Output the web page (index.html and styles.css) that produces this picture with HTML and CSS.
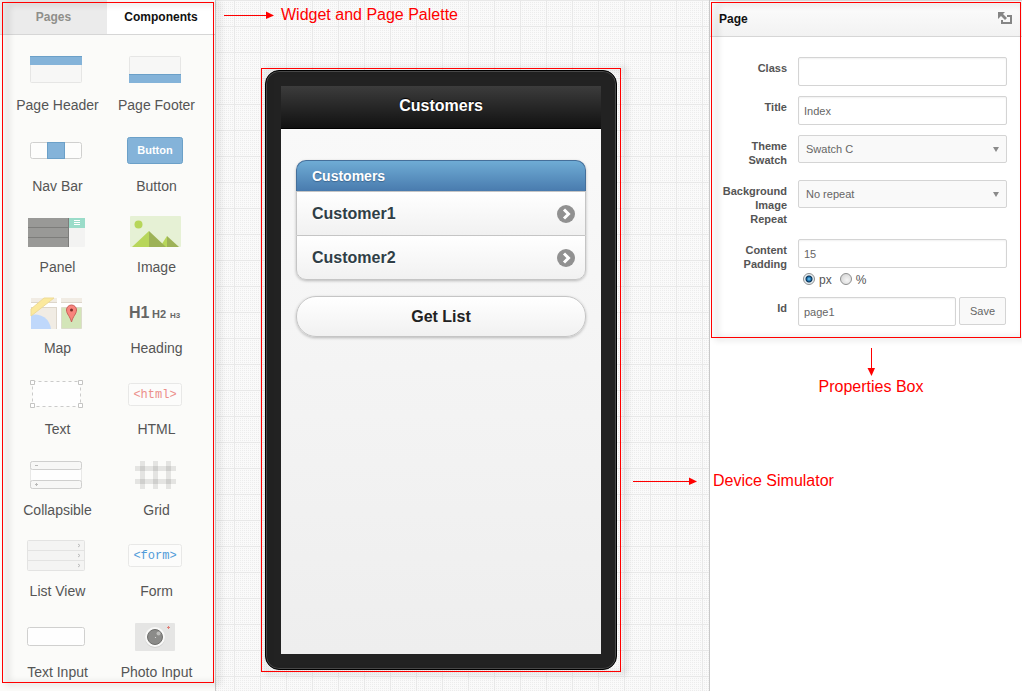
FILE: index.html
```html
<!DOCTYPE html>
<html lang="en">

<head>
    <meta charset="UTF-8">
    <meta name="viewport" content="width=device-width, initial-scale=1.0">
    <title>App Builder</title>
    <link rel="stylesheet" href="styles.css">
</head>

<body>
    <div class="builder">
        <aside class="palette">
            <div class="tabs">
                <button type="button" class="tab">Pages</button>
                <button type="button" class="tab active">Components</button>
            </div>

            <div class="widgets">
                <div class="widget">
                    <svg width="59" height="34" viewBox="0 0 59 34">
                        <rect x="3.5" y="4.5" width="51" height="26" rx="1" fill="#f7f7f6" stroke="#e6e6e5" />
                        <rect x="3" y="4" width="52" height="9" fill="#84b3d9" />
                        <rect x="3" y="4" width="52" height="1" fill="#6ba0c8" />
                    </svg>
                    <span>Page Header</span>
                </div>
                <div class="widget">
                    <svg width="59" height="34" viewBox="0 0 59 34">
                        <rect x="3.5" y="4.5" width="51" height="26" rx="1" fill="#f7f7f6" stroke="#e6e6e5" />
                        <rect x="3" y="22" width="52" height="9" fill="#84b3d9" />
                        <rect x="3" y="22" width="52" height="1" fill="#6ba0c8" />
                    </svg>
                    <span>Page Footer</span>
                </div>
                <div class="widget">
                    <svg width="59" height="34" viewBox="0 0 59 34">
                        <rect x="3.5" y="9.5" width="51" height="16" rx="2" fill="#fdfdfc" stroke="#d0d0cf" />
                        <rect x="20.5" y="9.5" width="17" height="16" fill="#84b3d9" stroke="#6ba0c8" />
                    </svg>
                    <span>Nav Bar</span>
                </div>
                <div class="widget">
                    <svg width="59" height="34" viewBox="0 0 59 34">
                        <rect x="1.5" y="4.5" width="55" height="26" rx="2" fill="#84b3d9" stroke="#6ba0c8" />
                        <text x="29" y="21" class="icon-button">Button</text>
                    </svg>
                    <span>Button</span>
                </div>
                <div class="widget">
                    <svg width="59" height="34" viewBox="0 0 59 34">
                        <rect x="1" y="4" width="57" height="29" rx="1" fill="#f3f3f2" />
                        <rect x="1" y="4" width="41" height="29" fill="#999997" />
                        <path d="M1 13.5H42M1 23.5H42M41.500 4V33" stroke="#7d7d7b" />
                        <rect x="42" y="4" width="16" height="10" fill="#9adcc9" />
                        <path d="M47 6.500H53M47 8.500H53M47 10.500H53" stroke="#fff" />
                    </svg>
                    <span>Panel</span>
                </div>
                <div class="widget">
                    <svg width="59" height="34" viewBox="0 0 59 34">
                        <rect x="4" y="2" width="51" height="31" rx="1" fill="#e6f1d5" />
                        <circle cx="12.500" cy="10.500" r="4" fill="#b7d65a" />
                        <path d="M34 33L41 22V33Z" fill="#b7d65a" />
                        <path d="M41 22L53 33H41Z" fill="#9db257" />
                        <path d="M6 33L23 17V33Z" fill="#b7d65a" />
                        <path d="M23 17L40 33H23Z" fill="#9db257" />
                    </svg>
                    <span>Image</span>
                </div>
                <div class="widget">
                    <svg width="59" height="34" viewBox="0 0 59 34">
                        <rect x="4" y="3" width="51" height="31" fill="#fff" />
                        <path d="M4 3H30V7H4ZM34 3H55V7H34ZM4 12H30V34H4Z" fill="#f1ece4" />
                        <path d="M34.500 12.500H54.500V33.500H34.500Z" fill="#d3e5b8" stroke="#dcdccb" />
                        <path d="M4 7.500H30M34 7.500H55M4 12.500H30M29.500 12V34" stroke="#ddd6cb" fill="none" />
                        <path d="M4 20A16 16 0 0 1 24 34H4Z" fill="#bfd8fb" />
                        <path d="M4 14L17 3H27L4 21Z" fill="#fbe99d" stroke="#eedb96" />
                        <path d="M44.500 27C43 21 39.500 19 39.500 15A5 5 0 0 1 49.500 15C49.500 19 46 21 44.500 27Z" fill="#f9847d" stroke="#c9605a" />
                        <circle cx="44.500" cy="15" r="1.500" fill="#7c2b27" />
                    </svg>
                    <span>Map</span>
                </div>
                <div class="widget">
                    <svg width="59" height="34" viewBox="0 0 59 34" class="icon-heading">
                        <text x="3" y="23" font-size="16">H1</text>
                        <text x="26" y="23" font-size="11">H2</text>
                        <text x="44" y="23" font-size="8">H3</text>
                    </svg>
                    <span>Heading</span>
                </div>
                <div class="widget">
                    <svg width="59" height="34" viewBox="0 0 59 34">
                        <rect x="5.500" y="5.500" width="48" height="25" fill="#fefefe" stroke="#cbcbca" stroke-dasharray="3 3" />
                        <path d="M3.500 4.500h4v4h-4zM51.500 4.500h4v4h-4zM3.500 27.500h4v4h-4zM51.500 27.500h4v4h-4z" fill="#fff" stroke="#c4c4c3" />
                    </svg>
                    <span>Text</span>
                </div>
                <div class="widget">
                    <svg width="59" height="34" viewBox="0 0 59 34">
                        <rect x="2.500" y="7.500" width="53" height="22" rx="2" fill="#fcfcfb" stroke="#e8e8e7" />
                        <text x="29" y="22" class="icon-code" fill="#ec8f8a">&lt;html&gt;</text>
                    </svg>
                    <span>HTML</span>
                </div>
                <div class="widget">
                    <svg width="59" height="34" viewBox="0 0 59 34">
                        <rect x="3.500" y="4.500" width="51" height="27" rx="2" fill="#fefefe" stroke="#e8e8e7" />
                        <rect x="3.500" y="4.500" width="51" height="8" rx="2" fill="#f7f7f6" stroke="#cfcfce" />
                        <rect x="3.500" y="23.500" width="51" height="8" rx="2" fill="#f7f7f6" stroke="#cfcfce" />
                        <path d="M8 8.500h3M8 27.500h3M9.500 26v3" stroke="#b9b9b8" />
                    </svg>
                    <span>Collapsible</span>
                </div>
                <div class="widget">
                    <svg width="59" height="34" viewBox="0 0 59 34">
                        <path d="M14 4h5v28h-5zM27 4h5v28h-5zM40 4h5v28h-5z" fill="#000" fill-opacity=".09" />
                        <path d="M9 9h41v5H9zM9 22h41v5H9z" fill="#000" fill-opacity=".09" />
                    </svg>
                    <span>Grid</span>
                </div>
                <div class="widget">
                    <svg width="59" height="34" viewBox="0 0 59 34">
                        <rect x=".5" y="2.500" width="57" height="30" rx="1" fill="#f4f4f3" stroke="#e3e3e2" />
                        <path d="M0 12.500H58M0 22.500H58" stroke="#e3e3e2" />
                        <path d="M51 6l2 1.500l-2 1.500M51 16l2 1.500l-2 1.500M51 26l2 1.500l-2 1.500" stroke="#bbb" fill="none" />
                    </svg>
                    <span>List View</span>
                </div>
                <div class="widget">
                    <svg width="59" height="34" viewBox="0 0 59 34">
                        <rect x="2.500" y="6.500" width="53" height="22" rx="2" fill="#fcfcfb" stroke="#e8e8e7" />
                        <text x="29" y="21" class="icon-code" fill="#4f9bd9">&lt;form&gt;</text>
                    </svg>
                    <span>Form</span>
                </div>
                <div class="widget">
                    <svg width="59" height="34" viewBox="0 0 59 34">
                        <rect x=".5" y="8.500" width="57" height="18" rx="2" fill="#fefefe" stroke="#d0d0cf" />
                    </svg>
                    <span>Text Input</span>
                </div>
                <div class="widget">
                    <svg width="59" height="34" viewBox="0 0 59 34">
                        <rect x="9" y="4" width="40" height="28" rx="1" fill="#e5e5e4" />
                        <circle cx="29" cy="19" r="10" fill="#d2d2d1" />
                        <circle cx="29" cy="18" r="10" fill="#f9f9f8" />
                        <circle cx="29" cy="18" r="7.500" fill="#8b8b89" stroke="#6e6e6c" />
                        <circle cx="32.500" cy="14.500" r="2" fill="#bdbdbb" />
                        <circle cx="29.500" cy="18.500" r=".6" fill="#ddd" />
                        <path d="M41 8.500h3M42.500 7v3" stroke="#e08078" />
                    </svg>
                    <span>Photo Input</span>
                </div>
            </div>
            <div class="outline"></div>
        </aside>

        <main class="canvas">
            <div class="note note-palette">
                <svg width="50" height="8" viewBox="0 0 50 8">
                    <path d="M0 4.500H42" stroke="#f00" />
                    <path d="M42 .5L50 4.500L42 8Z" fill="#f00" />
                </svg>
                <span>Widget and Page Palette</span>
            </div>

            <div class="device">
                <div class="screen">
                    <header class="screen-header">
                        <h1>Customers</h1>
                    </header>
                    <div class="screen-content">
                        <div class="list">
                            <h2>Customers</h2>
                            <a href="#">Customer1
                                <svg width="18" height="18" viewBox="0 0 18 18">
                                    <circle cx="9" cy="9" r="9" fill="#919191" />
                                    <path d="M7 4.500L11.500 9L7 13.500" stroke="#fff" stroke-width="3" fill="none" />
                                </svg>
                            </a>
                            <a href="#">Customer2
                                <svg width="18" height="18" viewBox="0 0 18 18">
                                    <circle cx="9" cy="9" r="9" fill="#919191" />
                                    <path d="M7 4.500L11.500 9L7 13.500" stroke="#fff" stroke-width="3" fill="none" />
                                </svg>
                            </a>
                        </div>
                        <button type="button" class="get-list">Get List</button>
                    </div>
                </div>
                <div class="outline"></div>
            </div>

            <div class="note note-device">
                <svg width="64" height="8" viewBox="0 0 64 8">
                    <path d="M0 4.500H56" stroke="#f00" />
                    <path d="M56 .5L64 4.500L56 8Z" fill="#f00" />
                </svg>
                <span>Device Simulator</span>
            </div>
        </main>

        <aside class="sidebar">
            <section class="properties">
                <header class="properties-header">
                    <h2>Page</h2>
                    <svg width="14" height="13" viewBox="0 0 14 13">
                        <path d="M0 0H7L5 2L9 6L7 8L3 4L0 7Z" fill="#858585" />
                        <path d="M9 4H13V11H4V8" stroke="#858585" stroke-width="2" fill="none" />
                    </svg>
                </header>

                <form class="properties-form">
                    <label for="class">Class</label>
                    <input type="text" id="class">

                    <label for="title">Title</label>
                    <input type="text" id="title" value="Index">

                    <label for="theme">Theme Swatch</label>
                    <div class="select">
                        <select id="theme">
                            <option>Swatch C</option>
                        </select>
                    </div>

                    <label for="repeat">Background Image Repeat</label>
                    <div class="select">
                        <select id="repeat">
                            <option>No repeat</option>
                        </select>
                    </div>

                    <label for="padding">Content Padding</label>
                    <div>
                        <input type="text" id="padding" value="15">
                        <div class="units">
                            <input type="radio" name="unit" id="unit-px" checked>
                            <label for="unit-px">px</label>
                            <input type="radio" name="unit" id="unit-percent">
                            <label for="unit-percent">%</label>
                        </div>
                    </div>

                    <label for="page-id">Id</label>
                    <div class="id-row">
                        <input type="text" id="page-id" value="page1">
                        <button type="button">Save</button>
                    </div>
                </form>
                <div class="outline"></div>
            </section>

            <div class="note note-properties">
                <svg width="8" height="28" viewBox="0 0 8 28">
                    <path d="M4.500 0V20" stroke="#f00" />
                    <path d="M.5 20H8L4.500 28Z" fill="#f00" />
                </svg>
                <span>Properties Box</span>
            </div>
        </aside>
    </div>
</body>

</html>
```
FILE: styles.css
```css
* {
    box-sizing: border-box;
}

body {
    margin: 0;
    font-family: "Liberation Sans", Arial, sans-serif;
    font-size: 11px;
    color: #555;
    background-color: #fff;
}

h1,
h2 {
    margin: 0;
}

svg {
    display: block;
    flex: none;
}

button,
input,
select {
    font-family: inherit;
    font-size: 11px;
    color: #666;
}

.builder {
    display: grid;
    grid-template-columns: 216px 1fr 313px;
    height: 100vh;
    overflow: hidden;
}

/* red callout around a part of the page */
.outline {
    position: absolute;
    inset: 2px 1px 8px 2px;
    border: 1px solid #f00;
    filter: drop-shadow(5px 1px 3px rgba(0, 0, 0, 0.4));
    pointer-events: none;
}

.note {
    display: flex;
    align-items: center;
    color: #f00;
    font-size: 16px;
    line-height: 18px;
    white-space: nowrap;
}

/* Palette */
.palette {
    position: relative;
    z-index: 1;
    background-color: #fbfbf9;
    border-right: 1px solid #c8c8c8;
}

.tabs {
    display: grid;
    grid-template-columns: 107px 1fr;
    border-bottom: 1px solid #d6d6d6;
}

.tab {
    height: 34px;
    padding: 0;
    border: none;
    background-color: #ebebeb;
    color: #8f8f8a;
    font-size: 12px;
    font-weight: bold;
    cursor: pointer;
}

.tab.active {
    background-color: #fff;
    color: #111;
}

.widgets {
    display: grid;
    grid-template-columns: 1fr 1fr;
    row-gap: 19px;
    padding: 17px 10px 0 7px;
}

.widget {
    display: flex;
    flex-direction: column;
    align-items: center;
    gap: 10px;
    font-size: 14px;
    line-height: 18px;
    white-space: nowrap;
}

.widget span {
    padding-left: 2px;
}

.icon-button {
    font-size: 11px;
    font-weight: bold;
    fill: #fff;
    text-anchor: middle;
}

.icon-heading {
    font-weight: bold;
    fill: #666;
}

.icon-code {
    font-family: "Liberation Mono", "Courier New", monospace;
    font-size: 12px;
    text-anchor: middle;
}

/* Canvas */
.canvas {
    position: relative;
    padding: 70px 0 0 49px;
    background-color: #fafafa;
    background-image:
        linear-gradient(to right, #e8e8e8 1px, transparent 1px),
        linear-gradient(#e8e8e8 1px, transparent 1px),
        conic-gradient(transparent 270deg, #ececec 0);
    background-size: 26px 26px, 26px 26px, 2px 2px;
    background-position: 18px 0, 0 0, 0 0;
}

.note-palette {
    position: absolute;
    top: 6px;
    left: 8px;
    gap: 7px;
}

.note-device {
    position: absolute;
    top: 472px;
    left: 417px;
    gap: 16px;
    z-index: 2;
}

.device {
    position: relative;
    width: 352px;
    padding: 15px;
    border: 1px solid #000;
    border-radius: 14px;
    background-color: #222;
    box-shadow: inset 0 0 0 1px #4a4a4a;
}

.device .outline {
    inset: -3px -5px -3px -5px;
}

.screen {
    display: flex;
    flex-direction: column;
    min-height: 568px;
    font-size: 16px;
}

.screen-header {
    padding: 9px 0 11px;
    border-bottom: 1px solid #000;
    background: linear-gradient(#3c3c3c, #111);
    color: #fff;
    text-align: center;
    text-shadow: 0 -1px 1px #000;
}

.screen-header h1 {
    font-size: 16px;
    line-height: 22px;
}

.screen-content {
    flex: 1;
    padding: 31px 15px 15px;
    background: linear-gradient(#f9f9f9, #eee);
}

.list {
    margin-bottom: 16px;
    border-radius: 10px;
    box-shadow: 0 1px 3px rgba(0, 0, 0, 0.25);
}

.list h2 {
    padding: 0 15px;
    border: 1px solid #456f9a;
    border-bottom: none;
    border-radius: 10px 10px 0 0;
    background: linear-gradient(#6facd5, #497bae);
    color: #fff;
    font-size: 14px;
    line-height: 30px;
    text-shadow: 0 1px 1px #3e6790;
}

.list a {
    display: flex;
    align-items: center;
    justify-content: space-between;
    height: 44px;
    padding: 0 10px 0 15px;
    border: 1px solid #c5c5c5;
    border-bottom: none;
    background: linear-gradient(#fff, #f1f1f1);
    color: #2f3e46;
    font-weight: bold;
    text-decoration: none;
    text-shadow: 0 1px 0 #fff;
}

.list a:last-child {
    height: 45px;
    border-bottom: 1px solid #c5c5c5;
    border-radius: 0 0 10px 10px;
}

.get-list {
    width: 100%;
    height: 41px;
    border: 1px solid #c5c5c5;
    border-radius: 20px;
    background: linear-gradient(#fff, #f1f1f1);
    box-shadow: 0 1px 3px rgba(0, 0, 0, 0.25);
    color: #222;
    font-size: 16px;
    font-weight: bold;
    cursor: pointer;
}

/* Properties */
.sidebar {
    border-left: 1px solid #c8c8c8;
    background-color: #fff;
}

.properties {
    position: relative;
    padding-bottom: 14px;
}

.properties .outline {
    inset: 2px 1px 2px 1px;
}

.properties-header {
    display: flex;
    align-items: center;
    justify-content: space-between;
    height: 37px;
    padding: 0 10px 0 9px;
    border-top: 1px solid #ddd;
    border-bottom: 1px solid #d6d6d6;
    background: linear-gradient(#fdfdfd, #f2f2f2);
}

.properties-header h2 {
    color: #111;
    font-size: 12px;
}

.properties-form {
    display: grid;
    grid-template-columns: 77px 1fr;
    gap: 10px 11px;
    align-items: start;
    padding: 20px 15px 0 0;
}

.properties-form > label {
    padding: 4px 0 3px 10px;
    font-weight: bold;
    line-height: 14px;
    text-align: right;
}

.properties-form input[type="text"] {
    display: block;
    width: 100%;
    height: 29px;
    padding: 0 5px;
    border: 1px solid #d4d4d4;
    border-radius: 2px;
    background-color: #fff;
    box-shadow: inset 0 1px 2px rgba(0, 0, 0, 0.06);
}

.select {
    position: relative;
}

.select select {
    display: block;
    appearance: none;
    width: 100%;
    height: 28px;
    padding: 0 7px;
    border: 1px solid #d4d4d4;
    border-radius: 2px;
    background-color: #f9f9f9;
}

.select::after {
    content: "";
    position: absolute;
    top: 12px;
    right: 8px;
    border: 3px solid transparent;
    border-top: 5px solid #8a8a8a;
    border-bottom: none;
    pointer-events: none;
}

.units {
    display: flex;
    align-items: center;
    height: 19px;
    padding: 2px 0 0 5px;
    font-size: 12px;
}

.units input {
    appearance: none;
    width: 12px;
    height: 12px;
    margin: 0 4px 0 0;
    border: 1px solid #8e8f8f;
    border-radius: 50%;
    background: radial-gradient(circle at 60% 60%, #f5f5f5, #cfcfcf);
}

.units input:checked {
    background: radial-gradient(circle, #7fd0f5 0, #1a6fae 2px, #0b2f4d 3px, #e6eef3 4px);
}

.units label {
    margin-right: 8px;
    padding-top: 2px;
}

.id-row {
    display: flex;
    align-items: flex-start;
    gap: 3px;
    padding-right: 1px;
}

.id-row input {
    flex: 1;
    min-width: 0;
}

.id-row button {
    width: 47px;
    height: 28px;
    padding: 0;
    border: 1px solid #d4d4d4;
    border-radius: 2px;
    background-color: #f9f9f9;
    cursor: pointer;
}

.note-properties {
    flex-direction: column;
    gap: 2px;
    margin-top: 8px;
    padding-left: 10px;
}
```
